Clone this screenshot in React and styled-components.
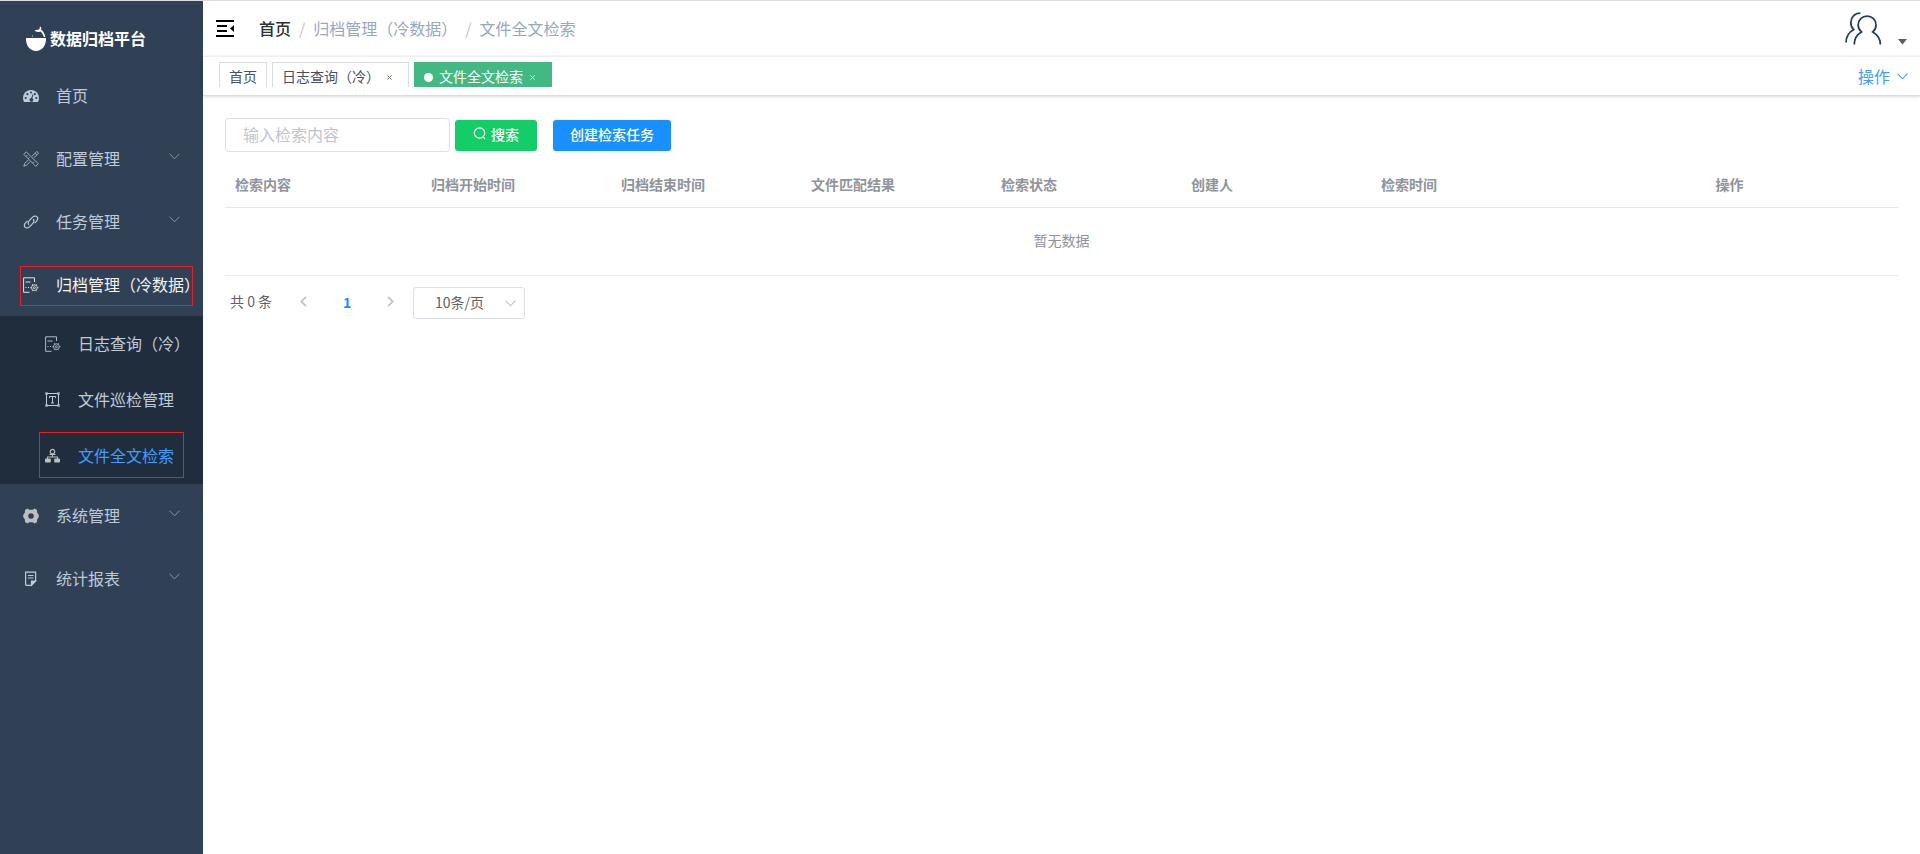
import React from "react";
import styled, { createGlobalStyle } from "styled-components";

const GlobalStyle = createGlobalStyle`
  *, *::before, *::after { box-sizing: border-box; }
  body {
    margin: 0;
    background: #fff;
    color: #606266;
    font-family: "Noto Sans CJK SC", "Liberation Sans", sans-serif;
    font-size: 14px;
    line-height: 20px;
  }
  a { color: inherit; text-decoration: none; }
  button, input, select { font: inherit; margin: 0; }
  button { cursor: pointer; }
  ul, ol { list-style: none; margin: 0; padding: 0; }
  svg { display: block; flex: none; }
`;

/* ---------- layout ---------- */

const Layout = styled.div`
  display: grid;
  grid-template-columns: 203px minmax(0, 1fr);
  min-height: 100vh;
  border-top: 1px solid #dcdcdc;
`;

const Sidebar = styled.aside`
  background: #304156;
  color: #bfcbd9;
`;

const Content = styled.div`
  min-width: 0;
`;

/* ---------- sidebar ---------- */

const Brand = styled.a`
  display: flex;
  align-items: center;
  gap: 4px;
  height: 63px;
  padding: 11px 0 0 26px;
  color: #fff;
  font-size: 16px;
  font-weight: 700;
`;

const MenuLink = styled.a`
  display: flex;
  align-items: center;
  gap: 17px;
  height: ${(p) => (p.$nested ? 56 : 63)}px;
  padding: 0 23px 0 ${(p) => (p.$nested ? 45 : 23)}px;
  font-size: 16px;
  color: ${(p) => (p.$active ? "#409eff" : p.$open ? "#f4f4f5" : "#bfcbd9")};
`;

const MenuLabel = styled.span`
  flex: 1;
  min-width: 0;
  padding-bottom: 2px;
  white-space: nowrap;
`;

const MenuArrow = styled.svg`
  margin: 0 0 4px -17px;
  color: #8793a1;
  opacity: ${(p) => (p.$faint ? 0.5 : 1)};
  transform: ${(p) => (p.$faint ? "rotate(180deg)" : "none")};
`;

const MenuItem = styled.li`
  position: relative;
`;

const SubMenu = styled.ul`
  background: #1f2d3d;
`;

const Marker = styled.span`
  position: absolute;
  border: 1px solid #ed1c24;
  pointer-events: none;
  top: ${(p) => (p.$nested ? 4 : 13)}px;
  left: ${(p) => (p.$nested ? 39 : 20)}px;
  right: ${(p) => (p.$nested ? 19 : 10)}px;
  height: ${(p) => (p.$nested ? 46 : 40)}px;
`;

/* ---------- header ---------- */

const Navbar = styled.header`
  display: flex;
  align-items: center;
  height: 55px;
  padding: 0 13px;
`;

const IconButton = styled.button`
  display: flex;
  align-items: flex-end;
  gap: 16px;
  padding: 0;
  border: 0;
  background: none;
  color: #000;
`;

const Breadcrumb = styled.ol`
  display: flex;
  flex: 1;
  margin-left: 24px;
  padding-bottom: 2px;
  font-size: 16px;
  color: #97a8be;
`;

const Crumb = styled.li`
  font-weight: ${(p) => (p.$root ? 500 : 400)};
  color: ${(p) => (p.$root ? "#303133" : "inherit")};

  &:not(:first-child)::before {
    content: "/";
    margin: 0 8px;
    color: #c0c4cc;
  }
`;

const TagBar = styled.nav`
  display: flex;
  align-items: flex-start;
  gap: 5px;
  height: 40px;
  padding: 5px 12px 0 16px;
  border-top: 1px solid #f0f0f2;
  border-bottom: 1px solid #d8dce5;
  box-shadow: 0 1px 3px 0 rgba(0, 0, 0, 0.12), 0 0 3px 0 rgba(0, 0, 0, 0.04);
`;

const Tag = styled.a`
  display: flex;
  align-items: center;
  height: 25px;
  padding: 2px ${(p) => (p.$closable ? 16 : 9)}px 0 9px;
  border: 1px solid ${(p) => (p.$active ? "#42b983" : "#d8dce5")};
  border-bottom: 0;
  background: ${(p) => (p.$active ? "#42b983" : "#fff")};
  color: ${(p) => (p.$active ? "#fff" : "#495060")};
`;

const TagDot = styled.i`
  width: 9px;
  height: 9px;
  margin: 2px 6px 0 0;
  border-radius: 50%;
  background: #fff;
`;

const TagClose = styled.svg`
  margin: 2px 0 0 7px;
  opacity: 0.8;
`;

const Actions = styled.button`
  display: flex;
  align-items: center;
  gap: 7px;
  margin-left: auto;
  padding: 4px 0;
  border: 0;
  background: none;
  font-size: 16px;
  line-height: 20px;
  color: #409eff;
`;

/* ---------- main area ---------- */

const Main = styled.main`
  padding: 22px 22px 0;
`;

const SearchForm = styled.form`
  display: flex;
  align-items: center;
`;

const SearchInput = styled.input`
  width: 225px;
  height: 34px;
  padding: 0 17px 2px;
  border: 1px solid #dcdfe6;
  border-radius: 4px;
  font-size: 16px;
  color: #606266;
  outline: none;

  &::placeholder { color: #c0c4cc; }
`;

const Button = styled.button`
  display: flex;
  align-items: center;
  gap: 5px;
  height: 31px;
  margin-left: ${(p) => (p.$spaced ? 16 : 5)}px;
  padding: 0 ${(p) => (p.$spaced ? 17 : 18)}px 3px;
  border: 0;
  border-radius: 3px;
  background: ${(p) => p.$color};
  font-weight: 500;
  line-height: 20px;
  color: #fff;
`;

const Table = styled.table`
  width: 100%;
  margin-top: 11px;
  table-layout: fixed;
  border-collapse: separate;
  border-spacing: 0;
  color: #909399;
`;

const HeadCell = styled.th`
  height: 45px;
  padding: 0 10px 2px;
  border-bottom: 1px solid #dfe6ec;
  font-weight: 700;
  text-align: ${(p) => p.$align || "left"};
`;

const EmptyCell = styled.td`
  height: 68px;
  padding: 0 0 3px;
  border-bottom: 1px solid #e6ebf5;
  text-align: center;
`;

const Pagination = styled.nav`
  display: flex;
  align-items: center;
  margin-top: 11px;
  padding-left: 5px;
`;

const Total = styled.span`
  margin-right: 14px;
  padding-bottom: 4px;
`;

const PageButton = styled.button`
  display: flex;
  align-items: center;
  justify-content: center;
  width: ${(p) => (p.$current ? 52 : 35)}px;
  height: 28px;
  padding: 0 0 3px;
  border: 0;
  background: none;
  font-weight: 700;
  color: ${(p) => (p.$current ? "#1890ff" : "#c0c4cc")};
`;

const SelectBox = styled.div`
  display: grid;
  grid-template-columns: minmax(0, 1fr) 20px;
  align-items: center;
  width: 112px;
  margin-left: 5px;
  color: #c0c4cc;

  & > svg { grid-area: 1 / 2; pointer-events: none; }
`;

const Select = styled.select`
  grid-area: 1 / 1 / 2 / 3;
  height: 32px;
  padding: 0 0 3px 21px;
  border: 1px solid #dcdfe6;
  border-radius: 3px;
  appearance: none;
  background: #fff;
  color: #606266;
`;

/* ---------- icons ---------- */

const Stroke = ({ children, size = 16, width = 1 }) => (
  <svg width={size} height={size} viewBox="0 0 16 16" fill="none" stroke="currentColor" strokeWidth={width} aria-hidden="true">
    {children}
  </svg>
);

const Chevron = () => (
  <svg width="11" height="7" viewBox="0 0 11 7" fill="none" stroke="currentColor" strokeWidth="1.1" aria-hidden="true">
    <path d="M.5 .7 5.5 5.8 10.5 .7" />
  </svg>
);

const BowlLogo = () => (
  <svg width="20" height="25" viewBox="0 0 20 25" fill="#fff" aria-hidden="true">
    <path d="M0 12h20c.3 7-3.600 13-10 13S-.3 19 0 12Z" />
    <path d="M8.500 4.800C10 3.200 12 4.200 13.300 3.300 14 2.500 13.600 1.200 14 .3c1.200.9 1.500 2.200 1 3.300 2.500 1.800 3.800 4.400 4.300 7.400h-1.500c-.5-2.300-1.700-4.400-3.600-5.600C12.400 6.300 10 6 8.500 4.800Z" />
    <circle cx="6.500" cy="10" r=".6" />
  </svg>
);

const DashboardIcon = () => (
  <svg width="16" height="16" viewBox="0 0 16 16" aria-hidden="true">
    <path fill="currentColor" d="M1 14C.3 12.800 0 11.500 0 10a8 8 0 0 1 16 0c0 1.500-.3 2.800-1 4Z" />
    <g fill="#304156">
      <circle cx="2.700" cy="10" r="1.100" />
      <circle cx="4.400" cy="6.200" r="1.100" />
      <circle cx="8" cy="4.400" r="1" />
      <circle cx="11.800" cy="6.200" r="1.100" />
      <circle cx="13.300" cy="10" r="1.100" />
      <path d="m9.400 6.500.9.300-.9 3.500a1.900 1.900 0 1 1-1.100-.3Z" />
    </g>
  </svg>
);

const ToolsIcon = () => (
  <Stroke width={0.8}>
    <path d="M3.300.8.800 3.300l12 12 2.500-2.500ZM3 5.500l1.400-1.400M5.200 7.700l1.300-1.300M9.600 12.100l1.300-1.300" />
    <path d="M13.500.8c.7-.5 2.300 1 1.700 1.700l-4.300 4.400M12 2.200l1.800 1.800M13.500.8 8.900 5.300M5.300 8.900 1.800 12.400.8 15.200l2.800-1L7.100 10.700" />
  </Stroke>
);

const LinkIcon = () => (
  <Stroke width={1.2}>
    <path d="M10.200 5.200c1 1.300.7 3-.4 4.200l-3 3.200c-1.500 1.600-3.500 1.800-4.600.7-1.200-1.200-.9-3.100.5-4.600l1.800-1.900" />
    <path d="M5.900 10.800c-1-1.300-.7-3 .4-4.200l3-3.200c1.500-1.600 3.500-1.800 4.600-.7 1.200 1.200.9 3.100-.5 4.600l-1.800 1.900" />
  </Stroke>
);

const ArchiveIcon = () => (
  <Stroke width={0.9}>
    <path d="M11.500 5V.8H.6v14.500h5.900M2.500 5h5M2.500 10.500h1M5 10.500h1" />
    <g strokeWidth=".8">
      <circle cx="11.400" cy="10.700" r="2.900" />
      <circle cx="11.400" cy="10.700" r="1" />
      <path d="M7.300 10.700h1.200M14.300 10.700h1.200M9.300 7.200l.6 1M13.500 7.200l-.6 1M9.300 14.200l.6-1M13.500 14.200l-.6-1" />
    </g>
  </Stroke>
);

const TextBoxIcon = () => (
  <Stroke>
    <path d="M1.500 1.500h12v12h-12ZM4.500 6V4.500h6V6M7.500 4.500v6.500M6 11h3" />
    <path d="M.5.500h2v2h-2ZM12.500.500h2v2h-2ZM.5 12.500h2v2h-2ZM12.500 12.500h2v2h-2Z" strokeWidth=".6" />
  </Stroke>
);

const TreeIcon = () => (
  <svg width="16" height="16" viewBox="0 0 16 16" fill="#bcbfc2" aria-hidden="true">
    <path fillRule="evenodd" d="M7.500.8a2.900 2.900 0 0 1 1.800 5.100h1.200v1H4.500v-1h1.200A2.900 2.900 0 0 1 7.500.8Zm0 1.300a1.600 1.600 0 1 0 0 3.200 1.600 1.600 0 0 0 0-3.200Z" />
    <path d="M7 7h1v1.500h5V10.500h1.200c.4 0 .8.300.8.700v2.500c0 .4-.4.800-.8.800H10c-.4 0-.8-.4-.8-.8v-2.500c0-.4.400-.7.800-.7h2v-1H3v1h2c.4 0 .8.300.8.700v2.500c0 .4-.4.800-.8.800H.8c-.4 0-.8-.4-.8-.8v-2.500c0-.4.400-.7.800-.7H2v-2h5Z" />
  </svg>
);

const GearIcon = () => (
  <svg width="16" height="16" viewBox="0 0 16 16" fill="#bcbfc2" aria-hidden="true">
    <path fillRule="evenodd" d="M4.500.6 6.200 1.800h3.600L11.500.6l2.600 1.500-.1 2.100L15.800 7v2L14 11.800l.1 2.100-2.600 1.500-1.700-1.200H6.200l-1.700 1.200-2.600-1.500.1-2.100L.2 9V7L2 4.200l-.1-2.100ZM8 5.200a2.800 2.800 0 1 0 0 5.600 2.800 2.800 0 0 0 0-5.600Z" />
  </svg>
);

const ReportIcon = () => (
  <Stroke width={1.2}>
    <path d="M2.600 1.200h10v8.600l-4.200 4.600H3.600c-.6 0-1-.4-1-1ZM5 4.500h5.500M5 7h5.500" />
    <path d="M8.500 14V10h4Z" fill="currentColor" />
  </Stroke>
);

const FoldIcon = () => (
  <svg width="19" height="17" viewBox="0 0 19 17" fill="currentColor" aria-hidden="true">
    <path d="M0 0h18v2H0ZM1 5h10v2H1ZM1 10h10v2H1ZM0 15h18v2H0ZM18 5v7l-4-3.500Z" />
  </svg>
);

const UsersIcon = () => (
  <svg width="37" height="35" viewBox="0 0 38 35" fill="none" stroke="#1d4060" strokeWidth="1.800" aria-hidden="true">
    <path d="M9.500 34c0-6 3-10.500 7.400-13-2.200-1.800-3.400-4.300-3.400-7.100a9.200 9.200 0 0 1 18.400 0c0 2.800-1.200 5.300-3.400 7.100 4.400 2.500 7.800 7 7.800 13" />
    <path d="M15.800 1.800C9.800 1.800 6 5.900 6 11.300c0 2.900.9 5.400 3 7.300-5 2.800-7.900 7.300-7.900 13.200" />
  </svg>
);

const CaretIcon = () => (
  <svg width="9" height="7" viewBox="0 0 9 7" fill="#5a5e66" aria-hidden="true">
    <path d="M0 0h9L4.500 5.500Z" />
  </svg>
);

const SearchIcon = () => (
  <svg width="13" height="13" viewBox="0 0 13 13" fill="none" stroke="currentColor" strokeWidth="1.200" aria-hidden="true">
    <circle cx="6.500" cy="6" r="5.200" />
    <path d="M10 10l2 2.200" />
  </svg>
);

const CloseIcon = () => (
  <TagClose width="5" height="5" viewBox="0 0 5 5" fill="none" stroke="currentColor" role="img" aria-label="关闭">
    <path d="M.4.4 4.600 4.600M4.600.4.4 4.600" />
  </TagClose>
);

const PageArrow = ({ next }) => (
  <svg width="7" height="11" viewBox="0 0 7 11" fill="none" stroke="currentColor" strokeWidth="1.800" aria-hidden="true">
    <path d={next ? "M1 .8 5.800 5.500 1 10.200" : "M6 .8 1.200 5.500 6 10.200"} />
  </svg>
);

/* ---------- data ---------- */

const menu = [
  { label: "首页", icon: DashboardIcon, leaf: true },
  { label: "配置管理", icon: ToolsIcon },
  { label: "任务管理", icon: LinkIcon },
  {
    label: "归档管理（冷数据）",
    icon: ArchiveIcon,
    marked: true,
    children: [
      { label: "日志查询（冷）", icon: ArchiveIcon },
      { label: "文件巡检管理", icon: TextBoxIcon },
      { label: "文件全文检索", icon: TreeIcon, active: true, marked: true },
    ],
  },
  { label: "系统管理", icon: GearIcon },
  { label: "统计报表", icon: ReportIcon },
];

const columns = [
  { title: "检索内容", width: 196 },
  { title: "归档开始时间", width: 190 },
  { title: "归档结束时间", width: 190 },
  { title: "文件匹配结果", width: 190 },
  { title: "检索状态", width: 190 },
  { title: "创建人", width: 190 },
  { title: "检索时间", width: 190 },
  { title: "操作", width: 337, align: "center" },
];

function Entry({ item, nested }) {
  const Icon = item.icon;
  const open = Boolean(item.children);
  return (
    <MenuItem>
      <MenuLink href="#" $nested={nested} $active={item.active} $open={open}>
        <Icon />
        <MenuLabel>{item.label}</MenuLabel>
        {!nested && !item.leaf && (
          <MenuArrow $faint={open} width="11" height="7" viewBox="0 0 11 7" fill="none" stroke="currentColor" aria-hidden="true">
            <path d="M.5 .7 5.5 5.8 10.5 .7" />
          </MenuArrow>
        )}
      </MenuLink>
      {item.marked && <Marker $nested={nested} />}
      {open && (
        <SubMenu>
          {item.children.map((child) => (
            <Entry key={child.label} item={child} nested />
          ))}
        </SubMenu>
      )}
    </MenuItem>
  );
}

export default function App() {
  return (
    <>
      <GlobalStyle />
      <Layout>
        <Sidebar>
          <Brand href="#">
            <BowlLogo />
            数据归档平台
          </Brand>
          <ul>
            {menu.map((item) => (
              <Entry key={item.label} item={item} />
            ))}
          </ul>
        </Sidebar>

        <Content>
          <Navbar>
            <IconButton type="button" aria-label="折叠菜单">
              <FoldIcon />
            </IconButton>
            <Breadcrumb>
              <Crumb $root><a href="#">首页</a></Crumb>
              <Crumb>归档管理（冷数据）</Crumb>
              <Crumb>文件全文检索</Crumb>
            </Breadcrumb>
            <IconButton type="button" aria-label="用户菜单">
              <UsersIcon />
              <CaretIcon />
            </IconButton>
          </Navbar>

          <TagBar>
            <Tag href="#">首页</Tag>
            <Tag href="#" $closable>
              日志查询（冷）
              <CloseIcon />
            </Tag>
            <Tag href="#" $closable $active>
              <TagDot />
              文件全文检索
              <CloseIcon />
            </Tag>
            <Actions type="button">
              操作
              <Chevron />
            </Actions>
          </TagBar>

          <Main>
            <SearchForm onSubmit={(e) => e.preventDefault()}>
              <SearchInput type="text" aria-label="检索内容" placeholder="输入检索内容" />
              <Button type="submit" $color="#13ce66">
                <SearchIcon />
                搜索
              </Button>
              <Button type="button" $color="#1890ff" $spaced>
                创建检索任务
              </Button>
            </SearchForm>

            <Table>
              <colgroup>
                {columns.map((c) => (
                  <col key={c.title} width={c.width} />
                ))}
              </colgroup>
              <thead>
                <tr>
                  {columns.map((c) => (
                    <HeadCell key={c.title} scope="col" $align={c.align}>{c.title}</HeadCell>
                  ))}
                </tr>
              </thead>
              <tbody>
                <tr>
                  <EmptyCell colSpan={columns.length}>暂无数据</EmptyCell>
                </tr>
              </tbody>
            </Table>

            <Pagination aria-label="分页">
              <Total>共 0 条</Total>
              <PageButton type="button" aria-label="上一页"><PageArrow /></PageButton>
              <PageButton type="button" $current>1</PageButton>
              <PageButton type="button" aria-label="下一页"><PageArrow next /></PageButton>
              <SelectBox>
                <Select aria-label="每页条数" defaultValue="10">
                  <option value="10">10条/页</option>
                  <option value="20">20条/页</option>
                  <option value="50">50条/页</option>
                </Select>
                <Chevron />
              </SelectBox>
            </Pagination>
          </Main>
        </Content>
      </Layout>
    </>
  );
}
